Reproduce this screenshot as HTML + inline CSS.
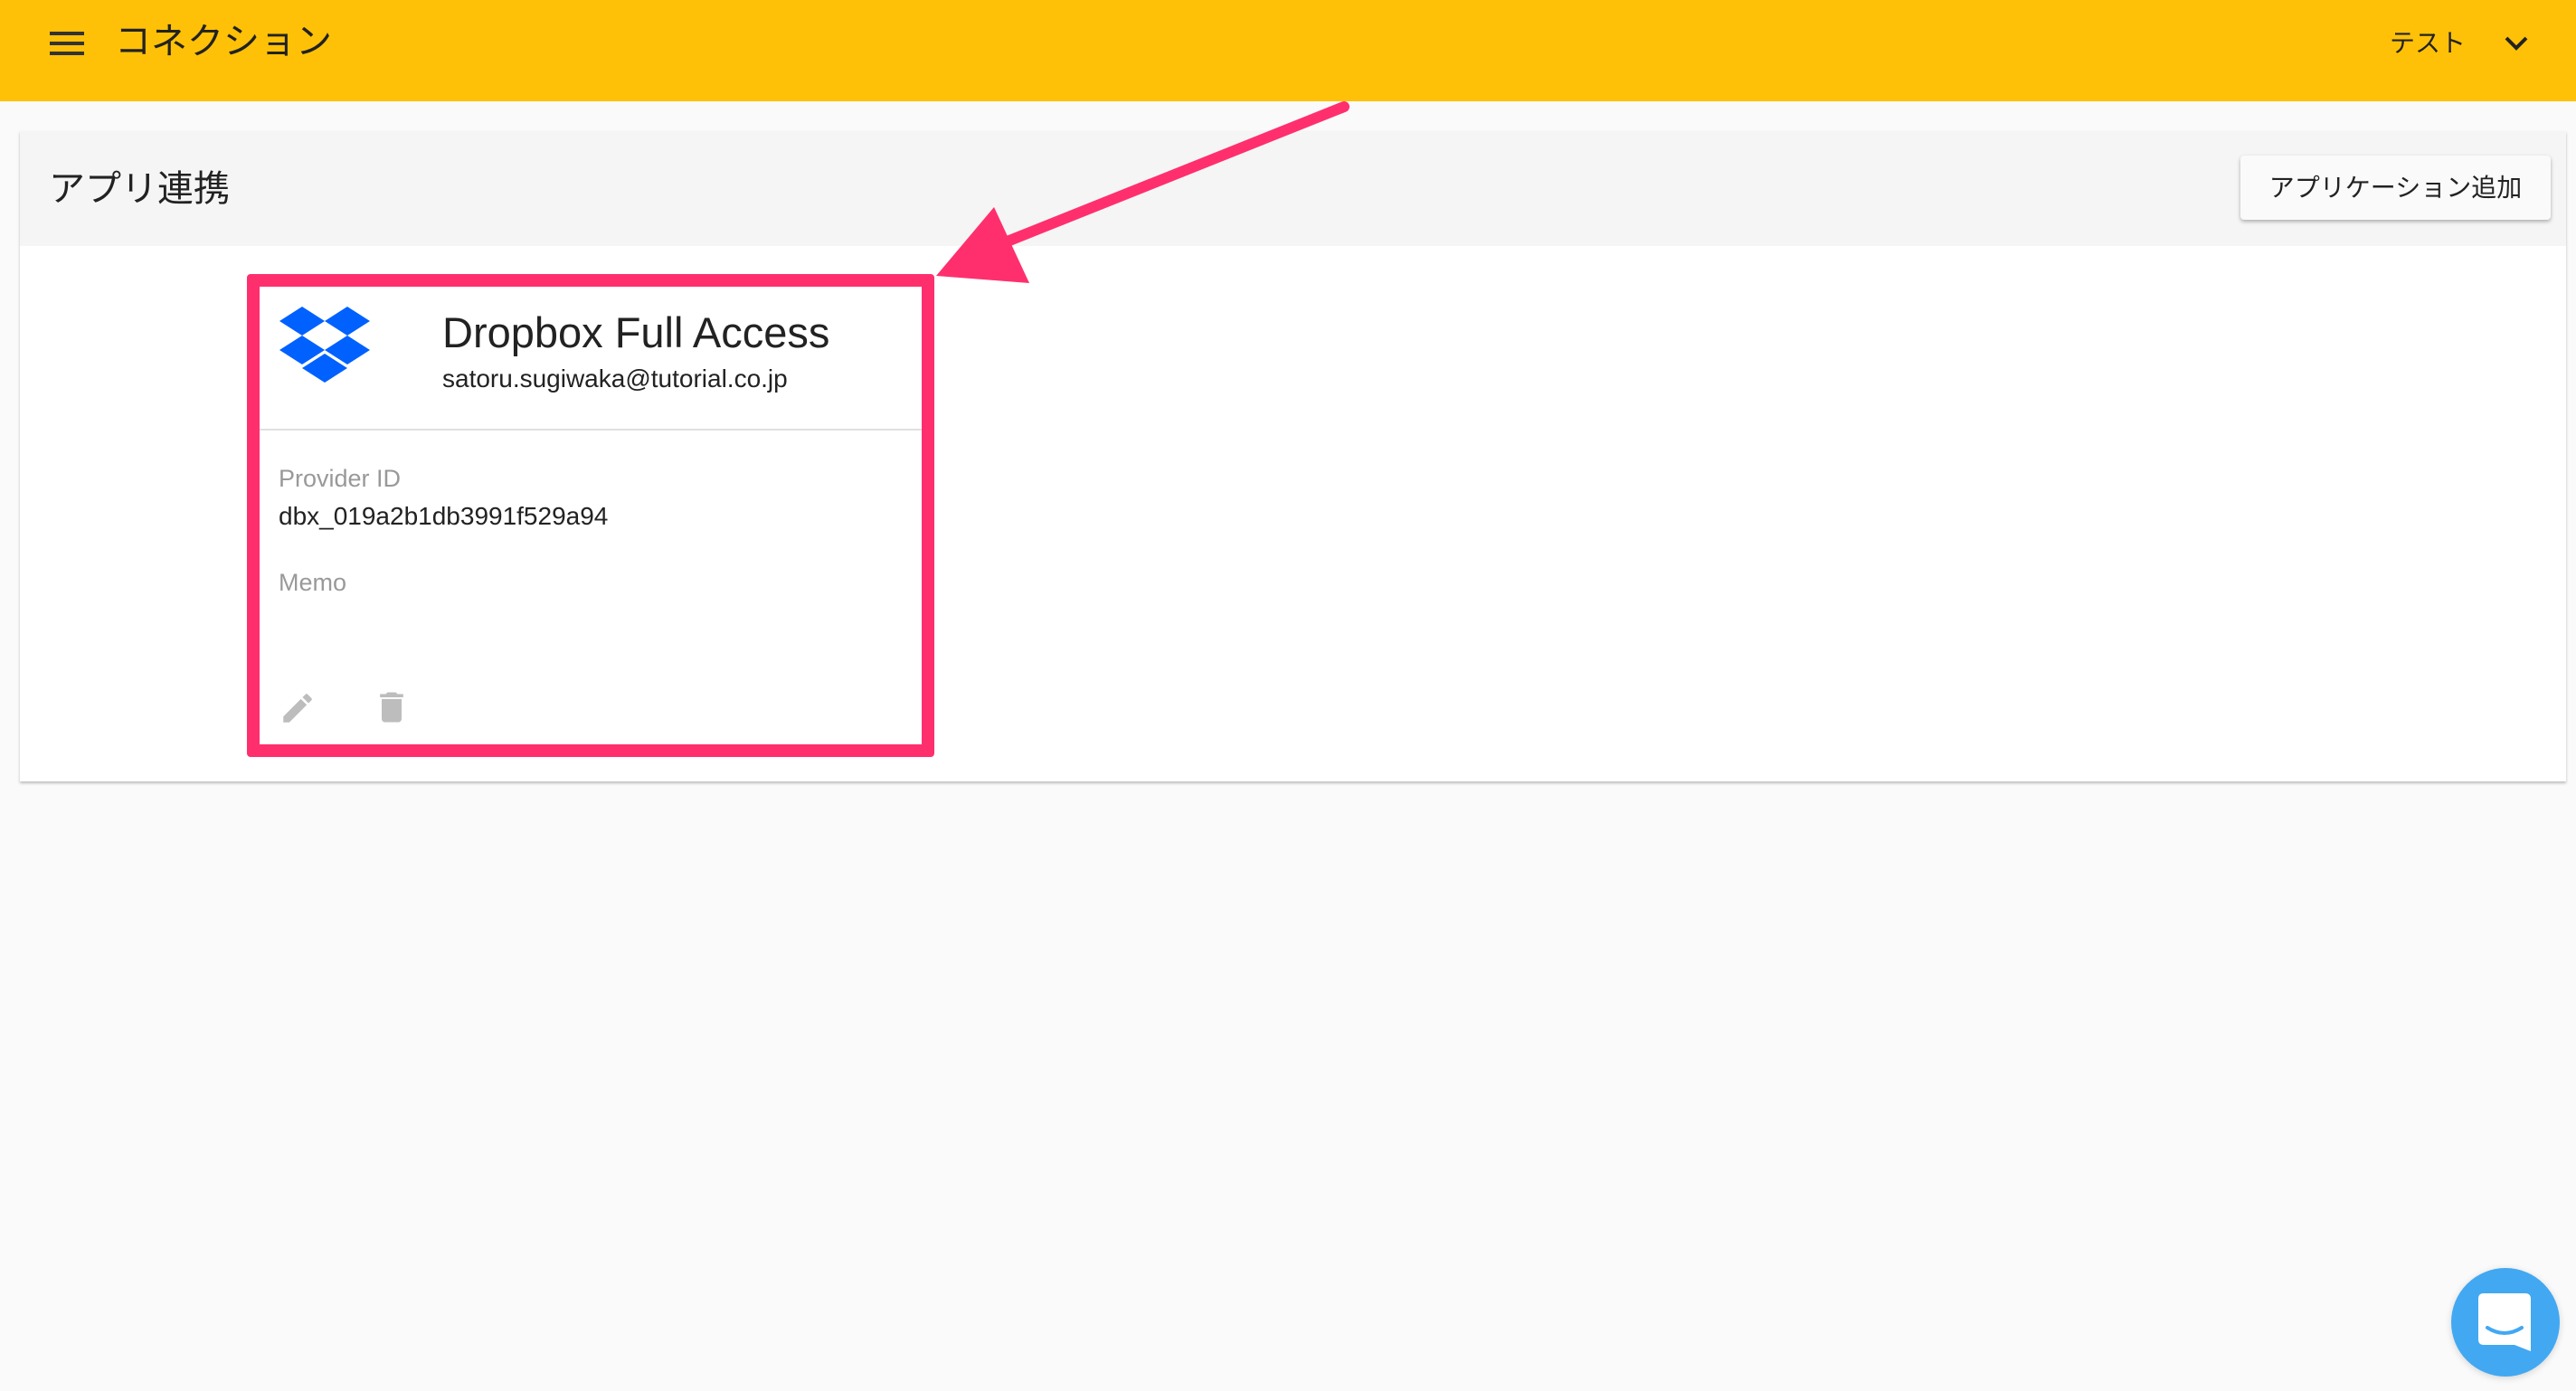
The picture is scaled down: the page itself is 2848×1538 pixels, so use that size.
<!DOCTYPE html>
<html><head><meta charset="utf-8"><style>
body{margin:0;width:2848px;height:1538px;background:#fafafa;position:relative;overflow:hidden;font-family:"Liberation Sans","Noto Sans CJK JP",sans-serif;}
.top{position:absolute;left:0;top:0;width:2848px;height:112px;background:#ffc107;}
.abs{position:absolute;}
.panel{position:absolute;left:22px;top:145px;width:2815px;height:719px;background:#fff;box-shadow:0 2px 3px rgba(0,0,0,.25);}
.phead{position:absolute;left:0;top:0;width:100%;height:127px;background:#f5f5f5;}
.btn{position:absolute;left:2477px;top:172px;width:343px;height:71px;background:#fafafa;box-shadow:0 2px 4px rgba(0,0,0,.3);border-radius:4px;font-size:28px;color:#222;text-align:center;line-height:71px;}
.card{position:absolute;left:273px;top:303px;width:732px;height:506px;border:14px solid #ff2f6e;border-radius:4px;background:#fff;}
</style></head><body>
<div class="top"></div>
<svg class="abs" style="left:55px;top:33px" width="40" height="30"><rect y="2" width="38" height="4" fill="#333"/><rect y="13" width="38" height="4" fill="#333"/><rect y="24" width="38" height="4" fill="#333"/></svg>
<div class="abs" style="left:127px;top:13px;font-size:40px;color:#222">コネクション</div>
<div class="abs" style="left:2642px;top:26px;font-size:28px;color:#222">テスト</div>
<svg class="abs" style="left:2768px;top:38px" width="28" height="20"><path d="M3 4 L14 15 L25 4" stroke="#222" stroke-width="4" fill="none"/></svg>
<div class="panel"><div class="phead"></div></div>
<div class="abs" style="left:54px;top:176px;font-size:40px;color:#222">アプリ連携</div>
<div class="btn">アプリケーション追加</div>
<div class="card">
<svg class="abs" style="left:22px;top:22px" width="100" height="86" viewBox="0 0 100 86"><g fill="#0061fe"><path d="M25 0 L50 16 L25 32 L0 16Z"/><path d="M75 0 L100 16 L75 32 L50 16Z"/><path d="M25 32 L50 48 L25 64 L0 48Z"/><path d="M75 32 L100 48 L75 64 L50 48Z"/><path d="M50 52 L75 68 L50 84 L25 68Z"/></g></svg>
<div class="abs" style="left:202px;top:23px;font-size:47px;color:#222">Dropbox Full Access</div>
<div class="abs" style="left:202px;top:86px;font-size:28px;color:#222">satoru.sugiwaka@tutorial.co.jp</div>
<div class="abs" style="left:0;top:157px;width:732px;height:2px;background:#e0e0e0"></div>
<div class="abs" style="left:21px;top:197px;font-size:27px;color:#999">Provider ID</div>
<div class="abs" style="left:21px;top:238px;font-size:28px;color:#222">dbx_019a2b1db3991f529a94</div>
<div class="abs" style="left:21px;top:312px;font-size:27px;color:#999">Memo</div>
<svg class="abs" style="left:21px;top:445px" width="42" height="42" viewBox="0 0 24 24"><path fill="#bdbdbd" d="M3 17.25V21h3.75L17.81 9.94l-3.75-3.75L3 17.25zM20.71 7.04a1 1 0 000-1.41l-2.34-2.34a1 1 0 00-1.41 0l-1.83 1.83 3.75 3.75 1.83-1.83z"/></svg>
<svg class="abs" style="left:124px;top:443px" width="44" height="44" viewBox="0 0 24 24"><path fill="#bdbdbd" d="M6 19c0 1.1.9 2 2 2h8c1.1 0 2-.9 2-2V7H6v12zM19 4h-3.5l-1-1h-5l-1 1H5v2h14V4z"/></svg>
</div>
<svg class="abs" style="left:0;top:0" width="2848" height="400"><path d="M1486 118 L1106 270" stroke="#ff2f6e" stroke-width="12" stroke-linecap="round"/><path d="M1035 305 L1099 229 L1138 313Z" fill="#ff2f6e"/></svg>
<div class="abs" style="left:2710px;top:1402px;width:120px;height:120px;border-radius:50%;background:#42a8f2;box-shadow:0 2px 8px rgba(0,0,0,.15)"></div>
<svg class="abs" style="left:2740px;top:1430px" width="62" height="66" viewBox="0 0 62 66"><path d="M6 0 H52 Q58 0 58 6 V64 L40 57 H6 Q0 57 0 51 V6 Q0 0 6 0Z" fill="#fff"/><path d="M10 38 Q29 50 48 38" stroke="#42a8f2" stroke-width="4" fill="none" stroke-linecap="round"/></svg>
</body></html>
